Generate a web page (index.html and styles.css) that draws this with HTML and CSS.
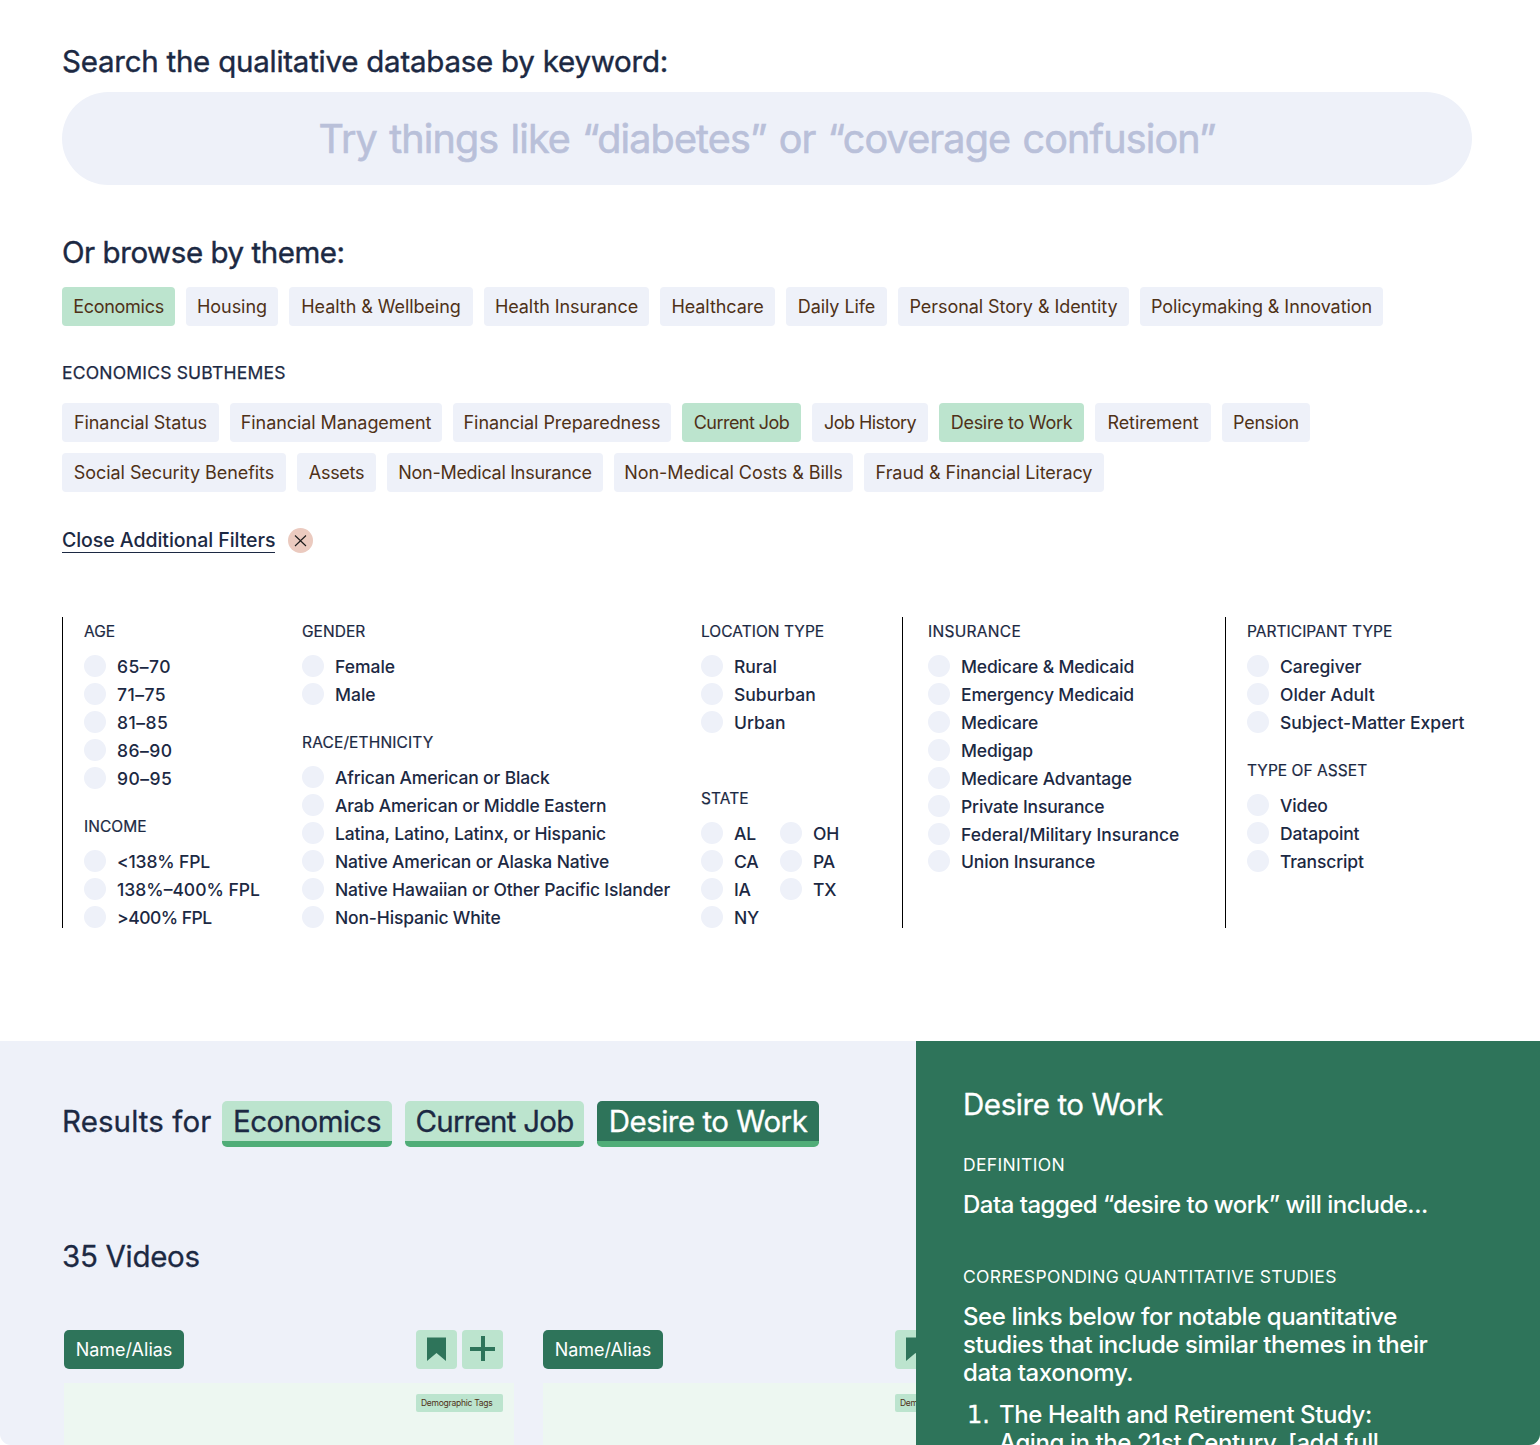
FILE: index.html
```html
<!DOCTYPE html>
<html lang="en">
<head>
<meta charset="utf-8">
<title>Qualitative Database</title>
<link rel="stylesheet" href="styles.css">
</head>
<body>
<main class="page">
  <section class="search">
    <h1 class="heading heading-search">Search the qualitative database by keyword:</h1>
    <div class="search-box">Try things like “diabetes” or “coverage confusion”</div>

    <h2 class="heading heading-theme">Or browse by theme:</h2>
    <div class="chips chips-themes">
      <span class="chip active snug">Economics</span>
      <span class="chip">Housing</span>
      <span class="chip">Health &amp; Wellbeing</span>
      <span class="chip">Health Insurance</span>
      <span class="chip">Healthcare</span>
      <span class="chip">Daily Life</span>
      <span class="chip">Personal Story &amp; Identity</span>
      <span class="chip">Policymaking &amp; Innovation</span>
    </div>

    <h3 class="subheading">ECONOMICS SUBTHEMES</h3>
    <div class="chips chips-sub-a">
      <span class="chip">Financial Status</span>
      <span class="chip">Financial Management</span>
      <span class="chip">Financial Preparedness</span>
      <span class="chip active tight">Current Job</span>
      <span class="chip tight">Job History</span>
      <span class="chip active snug">Desire to Work</span>
      <span class="chip">Retirement</span>
      <span class="chip snug">Pension</span>
    </div>
    <div class="chips chips-sub-b">
      <span class="chip">Social Security Benefits</span>
      <span class="chip snug">Assets</span>
      <span class="chip snug">Non-Medical Insurance</span>
      <span class="chip">Non-Medical Costs &amp; Bills</span>
      <span class="chip">Fraud &amp; Financial Literacy</span>
    </div>

    <div class="close-filters">
      <a class="close-link">Close Additional Filters</a>
      <span class="close-icon"><svg width="25" height="25" viewBox="0 0 25 25"><path d="M7 7.500 L18 18 M18 7.500 L7 18" stroke="#1b1b1b" stroke-width="1.1" fill="none"/></svg></span>
    </div>
  </section>

  <section class="filters">
    <div class="col col-age">
      <h4>AGE</h4>
      <ul class="options wide">
        <li>65–70</li><li>71–75</li><li>81–85</li><li>86–90</li><li>90–95</li>
      </ul>
      <h4>INCOME</h4>
      <ul class="options">
        <li>&lt;138% FPL</li><li class="even">138%–400% FPL</li><li class="narrow">&gt;400% FPL</li>
      </ul>
    </div>
    <div class="col">
      <h4>GENDER</h4>
      <ul class="options even"><li>Female</li><li>Male</li></ul>
      <h4 class="race">RACE/ETHNICITY</h4>
      <ul class="options">
        <li>African American or Black</li>
        <li>Arab American or Middle Eastern</li>
        <li>Latina, Latino, Latinx, or Hispanic</li>
        <li>Native American or Alaska Native</li>
        <li>Native Hawaiian or Other Pacific Islander</li>
        <li>Non-Hispanic White</li>
      </ul>
    </div>
    <div class="col">
      <h4>LOCATION TYPE</h4>
      <ul class="options even"><li>Rural</li><li>Suburban</li><li>Urban</li></ul>
      <h4 class="state">STATE</h4>
      <div class="states">
        <ul class="options"><li>AL</li><li>CA</li><li>IA</li><li>NY</li></ul>
        <ul class="options"><li>OH</li><li>PA</li><li>TX</li></ul>
      </div>
    </div>
    <div class="col col-insurance">
      <h4 class="spaced">INSURANCE</h4>
      <ul class="options">
        <li>Medicare &amp; Medicaid</li>
        <li>Emergency Medicaid</li>
        <li>Medicare</li>
        <li>Medigap</li>
        <li>Medicare Advantage</li>
        <li>Private Insurance</li>
        <li class="even">Federal/Military Insurance</li>
        <li class="last">Union Insurance</li>
      </ul>
    </div>
    <div class="col col-type">
      <h4>PARTICIPANT TYPE</h4>
      <ul class="options even"><li>Caregiver</li><li>Older Adult</li><li>Subject-Matter Expert</li></ul>
      <h4>TYPE OF ASSET</h4>
      <ul class="options"><li>Video</li><li>Datapoint</li><li>Transcript</li></ul>
    </div>
  </section>

  <section class="bottom">
    <div class="results">
      <div class="results-title">
        <span class="results-for">Results for</span>
        <span class="result-tag">Economics</span>
        <span class="result-tag">Current Job</span>
        <span class="result-tag dark">Desire to Work</span>
      </div>
      <h2 class="count">35 Videos</h2>
      <div class="cards">
        <article class="card">
          <div class="card-head">
            <span class="alias">Name/Alias</span>
            <span class="icon-btn"><svg width="41" height="39" viewBox="0 0 41 39"><path d="M11 7.500 H30 V31 L20.500 23 L11 31 Z" fill="#2e745a"/></svg></span>
            <span class="icon-btn"><svg width="41" height="39" viewBox="0 0 41 39"><path d="M19 6 H23 V17 H33 V21 H23 V31 H19 V21 H8 V17 H19 Z" fill="#2e745a"/></svg></span>
          </div>
          <div class="card-body"><span class="demo">Demographic Tags</span></div>
        </article>
        <article class="card">
          <div class="card-head">
            <span class="alias">Name/Alias</span>
            <span class="icon-btn"><svg width="41" height="39" viewBox="0 0 41 39"><path d="M11 7.500 H30 V31 L20.500 23 L11 31 Z" fill="#2e745a"/></svg></span>
          </div>
          <div class="card-body"><span class="demo">Demographic Tags</span></div>
        </article>
      </div>
    </div>
    <aside class="panel">
      <h2 class="panel-title">Desire to Work</h2>
      <h3 class="panel-label definition">DEFINITION</h3>
      <p class="panel-text quote">Data tagged “desire to work” will include...</p>
      <h3 class="panel-label studies">CORRESPONDING QUANTITATIVE STUDIES</h3>
      <p class="panel-text">See links below for notable quantitative<br>studies that include similar themes in their<br>data taxonomy.</p>
      <div class="study">
        <span class="num">1.</span>
        <p class="panel-text">The Health and Retirement Study:<br>Aging in the 21st Century, [add full</p>
      </div>
    </aside>
  </section>
</main>
</body>
</html>
```

FILE: styles.css
```css
* { box-sizing: border-box; }
body, h1, h2, h3, h4, p, ul { margin: 0; padding: 0; font-weight: 400; }
ul { list-style: none; }
body {
  background: #fff;
  color: #1c2943;
  font-family: Inter, "Liberation Sans", sans-serif;
  white-space: nowrap;
}
svg { display: block; }
.page {
  width: 1540px;
  height: 1445px;
  overflow: hidden;
  display: flex;
  flex-direction: column;
  border-radius: 0 0 11px 11px;
}

/* Search and themes */
.search { height: 617px; padding: 41px 68px 0 62px; flex: none; }
.heading { font-size: 29.5px; line-height: 40px; -webkit-text-stroke: 0.4px; }
.heading-search { letter-spacing: -0.24px; }
.heading-theme { letter-spacing: -0.45px; margin-top: 47px; }
.search-box {
  margin-top: 11px;
  height: 93px;
  padding-top: 1px;
  border-radius: 47px;
  background: #eef1f9;
  color: #b9c0d9;
  font-size: 39.5px;
  -webkit-text-stroke: 0.6px;
  line-height: 93px;
  letter-spacing: -0.86px;
  word-spacing: 2px;
  text-align: center;
}
.chips { display: grid; column-gap: 11px; }
.chips-themes { margin-top: 15px; grid-template-columns: 113px 92px 184px 165px 115px 101px 231px 243px; }
.chips-sub-a { margin-top: 17px; grid-template-columns: 157px 212px 218px 119px 116px 145px 116px 88px; }
.chips-sub-b { margin-top: 11px; grid-template-columns: 224px 79px 216px 239px 240px; }
.chip {
  height: 39px;
  border-radius: 4px;
  background: #eef1f9;
  color: #4f3118;
  font-size: 18px;
  line-height: 39px;
  letter-spacing: -0.07px;
  text-align: center;
}
.chip.active { background: #bce4ce; }
.chip.snug { letter-spacing: -0.28px; }
.chip.tight { letter-spacing: -0.55px; }
.subheading { margin-top: 34px; font-size: 17.5px; line-height: 26px; letter-spacing: 0.2px; -webkit-text-stroke: 0.25px; }
.close-filters { margin-top: 36px; display: flex; align-items: center; gap: 13px; }
.close-link {
  width: 213px;
  height: 25px;
  background: linear-gradient(#1c2943, #1c2943) 0 23.5px / 100% 1.5px no-repeat;
  font-size: 19.5px;
  font-weight: 500;
  line-height: 25px;
  letter-spacing: -0.05px;
}
.close-icon { width: 25px; height: 25px; border-radius: 50%; background: #ebcabf; }

/* Filters */
.filters {
  flex: none;
  height: 424px;
  margin-left: 62px;
  display: grid;
  grid-template-columns: 240px 399px 201px 323px 315px;
}
.col { height: 311px; }
.col-age, .col-type { border-left: 1px solid #000; padding-left: 21px; }
.col-insurance { border-left: 1px solid #000; padding-left: 25px; }
.col h4 { height: 28px; padding-top: 1px; font-size: 15.5px; line-height: 28px; letter-spacing: 0.04px; -webkit-text-stroke: 0.2px; }
.col h4.spaced { letter-spacing: 0.3px; }
.col h4.race { letter-spacing: 0.15px; }
.options + h4 { margin-top: 20px; }
.col h4.state { margin-top: 48px; }
.options { padding-top: 7px; font-size: 17.5px; font-weight: 500; letter-spacing: -0.16px; }
.options li { height: 28px; display: flex; gap: 11px; line-height: 30px; }
.options li::before { content: ""; width: 22px; height: 22px; margin-top: 3px; border-radius: 50%; background: #eef1f9; }
.options.wide { letter-spacing: 0.5px; }
.options.even, .options li.even { letter-spacing: 0; }
.options li.narrow { letter-spacing: -0.5px; }
.options li.last { margin-top: -1px; }
.states { display: grid; grid-template-columns: 79px 79px; }

/* Results */
.bottom { flex: 1; display: grid; grid-template-columns: 916px 624px; }
.results { background: #eef1f9; overflow: hidden; padding: 60px 0 0 62px; }
.results-title { display: flex; font-size: 29.5px; line-height: 40px; -webkit-text-stroke: 0.3px; }
.results-for { width: 160px; letter-spacing: 0.1px; }
.result-tag {
  width: 170px;
  height: 46px;
  border-radius: 5px;
  border-bottom: 6px solid #50ad78;
  background: #bce4ce;
  text-align: center;
  letter-spacing: -0.55px;
}
.result-tag + .result-tag { width: 179px; margin-left: 13px; letter-spacing: -0.75px; }
.result-tag.dark.dark { width: 222px; background: #2e745a; color: #fff; letter-spacing: -0.5px; }
.count { margin-top: 89px; font-size: 29.5px; line-height: 40px; letter-spacing: -0.3px; -webkit-text-stroke: 0.3px; }
.cards { margin: 54px 0 0 2px; display: grid; grid-template-columns: 450px 450px; gap: 29px; }
.card-head { display: flex; gap: 5px; }
.alias {
  width: 120px;
  height: 39px;
  margin-right: 227px;
  border-radius: 5px;
  background: #2e745a;
  color: #fff;
  font-size: 18px;
  line-height: 39px;
  text-align: center;
}
.icon-btn { width: 41px; height: 39px; border-radius: 4px; background: #bce4ce; }
.card-body { height: 260px; margin-top: 14px; padding: 11px 0 0 352px; background: #edf7f1; }
.demo {
  display: block;
  width: 87px;
  height: 18px;
  padding-left: 5px;
  border-radius: 2px;
  background: #bce4ce;
  color: #4f3118;
  font-size: 8.5px;
  line-height: 18px;
  letter-spacing: -0.26px;
}

/* Detail panel */
.panel { background: #2e745a; color: #fff; padding: 43px 0 0 47px; overflow: hidden; }
.panel-title { font-size: 29.5px; line-height: 40px; letter-spacing: -0.42px; -webkit-text-stroke: 0.3px; }
.panel-label { font-size: 17.5px; line-height: 24px; letter-spacing: 0.33px; }
.definition { margin-top: 29px; }
.studies { margin-top: 46px; }
.panel-text { margin-top: 14px; font-size: 24px; font-weight: 500; line-height: 28px; letter-spacing: -0.42px; }
.panel-text.quote { letter-spacing: -0.52px; }
.study { display: grid; grid-template-columns: 36px 1fr; }
.num { margin-top: 14px; padding-left: 4px; font: 24px/28px "DejaVu Sans", sans-serif; -webkit-text-stroke: 0.3px; }
```
